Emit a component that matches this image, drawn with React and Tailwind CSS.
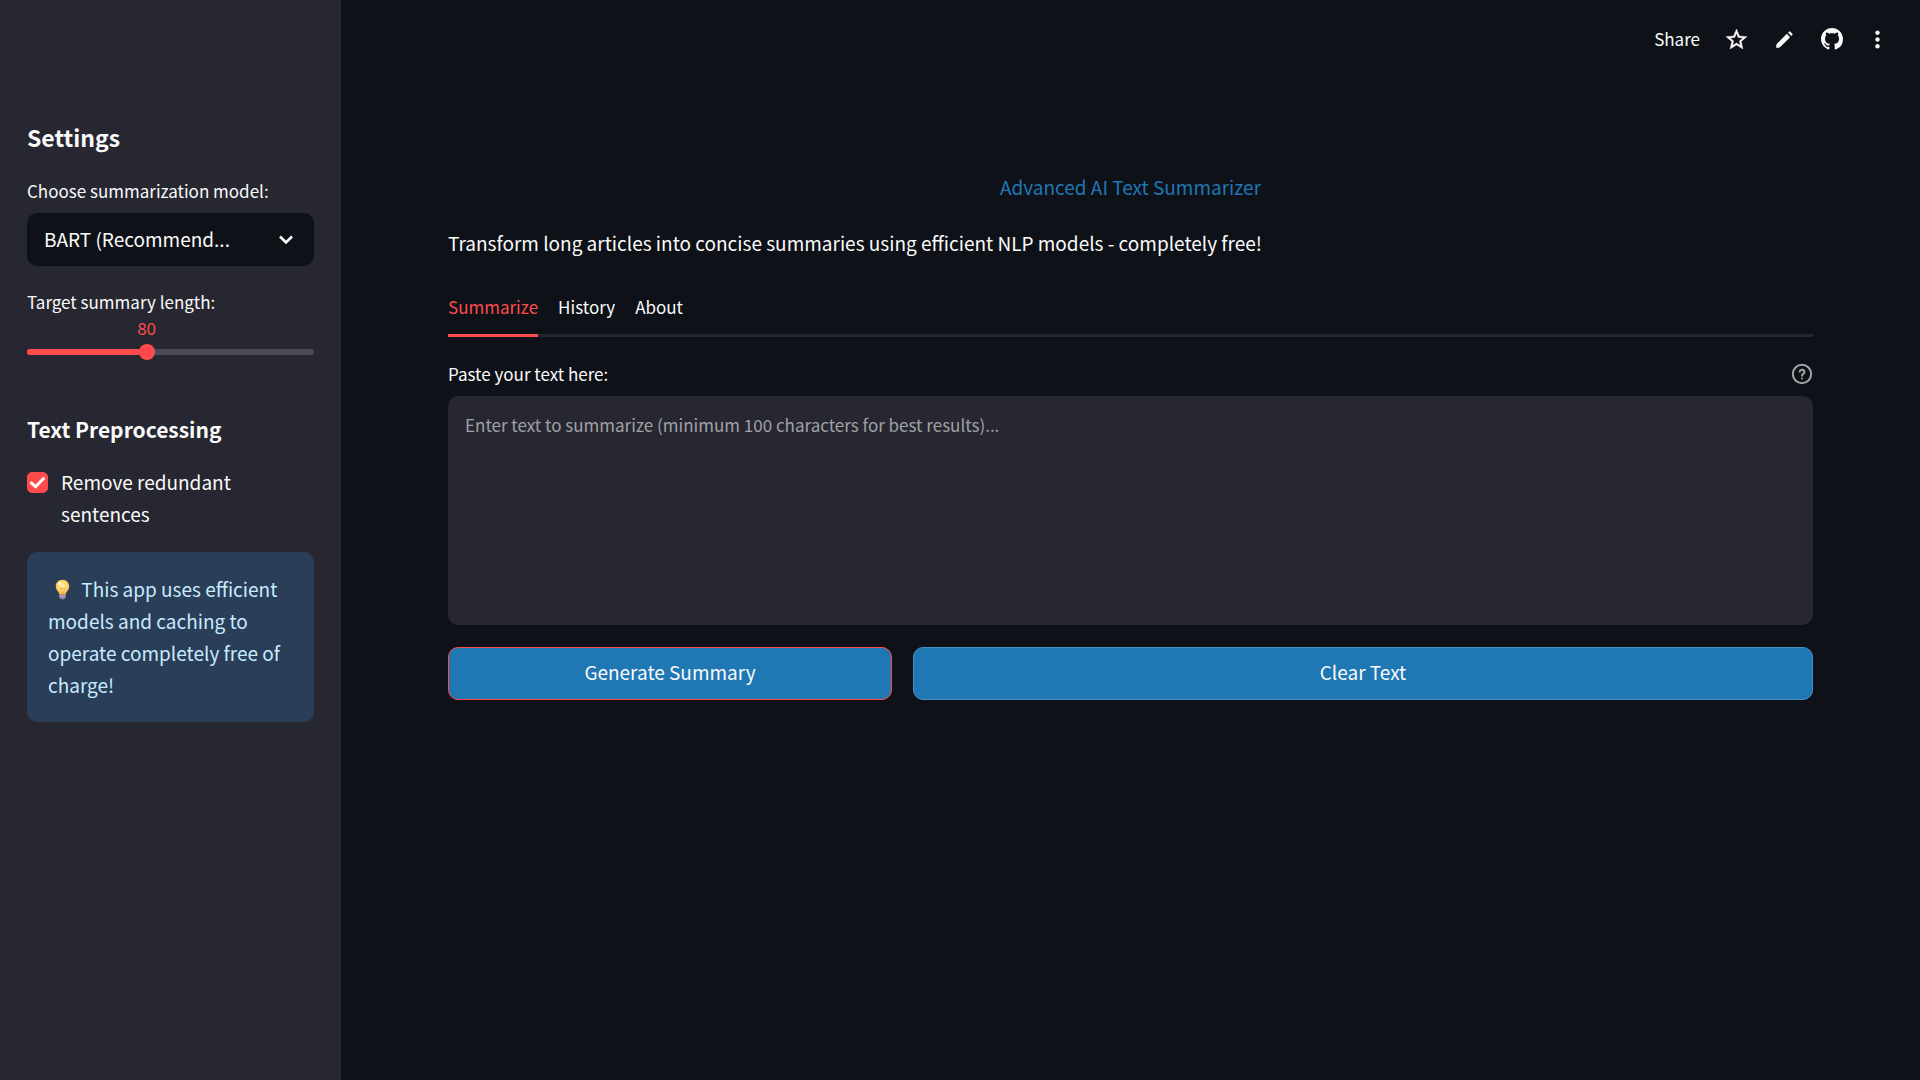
import { useState } from "react";

const FONT = "font-['Noto_Sans_CJK_SC','Noto_Sans',sans-serif]";

function IconButton({ label, className, children }) {
  return (
    <button type="button" aria-label={label} className={`flex h-8 items-center justify-center ${className}`}>
      {children}
    </button>
  );
}

function Header() {
  return (
    <header className="flex h-[78px] items-center justify-end pr-[27px]">
      <button type="button" className="mr-3 text-[17px] leading-8">Share</button>
      <IconButton label="Add to favorites" className="w-12">
        <svg viewBox="0 0 24 24" className="size-[25px]" fill="currentColor" stroke="currentColor" strokeWidth="0.4">
          <path d="M22 9.24l-7.19-.62L12 2 9.19 8.63 2 9.24l5.46 4.73L5.82 21 12 17.27 18.18 21l-1.63-7.03L22 9.24zM12 15.4l-3.76 2.27 1-4.28-3.32-2.88 4.38-.38L12 6.1l1.71 4.04 4.38.38-3.32 2.88 1 4.28L12 15.4z" />
        </svg>
      </IconButton>
      <IconButton label="Edit source" className="w-12">
        <svg viewBox="0 0 8 8" className="size-[17px]" fill="currentColor">
          <path d="M5.1 1.35L6.65 2.9 2.1 7.45Q1.6 7.9 1 7.9H.1V7Q.1 6.4.55 5.9zM5.65.8L6.15.3Q6.45.05 6.75.3L7.7 1.25Q7.95 1.55 7.7 1.85L7.2 2.35z" />
        </svg>
      </IconButton>
      <IconButton label="View on GitHub" className="w-12">
        <svg viewBox="0 0 16 16" className="size-[22px]" fill="currentColor">
          <path d="M8 0C3.58 0 0 3.58 0 8c0 3.54 2.29 6.53 5.47 7.59.4.07.55-.17.55-.38 0-.19-.01-.82-.01-1.49-2.01.37-2.53-.49-2.69-.94-.09-.23-.48-.94-.82-1.13-.28-.15-.68-.52-.01-.53.63-.01 1.08.58 1.23.82.72 1.21 1.87.87 2.33.66.07-.52.28-.87.51-1.07-1.78-.2-3.64-.89-3.64-3.95 0-.87.31-1.59.82-2.15-.08-.2-.36-1.02.08-2.12 0 0 .67-.21 2.2.82.64-.18 1.32-.27 2-.27s1.36.09 2 .27c1.53-1.04 2.2-.82 2.2-.82.44 1.1.16 1.92.08 2.12.51.56.82 1.27.82 2.15 0 3.07-1.87 3.75-3.65 3.95.29.25.54.73.54 1.48 0 1.07-.01 1.93-.01 2.2 0 .21.15.46.55.38A8.01 8.01 0 0 0 16 8c0-4.42-3.58-8-8-8z" />
        </svg>
      </IconButton>
      <IconButton label="Main menu" className="ml-[5px] w-8">
        <svg viewBox="0 0 24 24" className="size-[27px]" fill="currentColor">
          <path d="M12 8c1.1 0 2-.9 2-2s-.9-2-2-2-2 .9-2 2 .9 2 2 2zm0 2c-1.1 0-2 .9-2 2s.9 2 2 2 2-.9 2-2-.9-2-2-2zm0 6c-1.1 0-2 .9-2 2s.9 2 2 2 2-.9 2-2-.9-2-2-2z" />
        </svg>
      </IconButton>
    </header>
  );
}

function LengthSlider() {
  const [value, setValue] = useState(80);
  const min = 30;
  const max = 150;
  const percent = ((value - min) / (max - min)) * 100;
  return (
    <div className="mt-[22px]">
      <label htmlFor="length" className="block text-[17px] leading-7">Target summary length:</label>
      <output
        htmlFor="length"
        className="block w-10 -translate-x-1/2 text-center text-[17px] leading-6 text-[#ff4b4b]"
        style={{ marginLeft: `${percent}%` }}
      >
        {value}
      </output>
      <div className="relative mt-1 flex h-4 items-center">
        <div className="flex h-1.5 w-full overflow-hidden rounded-full bg-[#4a4b55]">
          <div className="bg-[#ff4b4b]" style={{ width: `${percent}%` }} />
        </div>
        <input
          id="length"
          type="range"
          min={min}
          max={max}
          value={value}
          onChange={(e) => setValue(Number(e.target.value))}
          className="absolute inset-y-0 -right-2 -left-2 cursor-pointer appearance-none bg-transparent [&::-webkit-slider-thumb]:size-4 [&::-webkit-slider-thumb]:appearance-none [&::-webkit-slider-thumb]:rounded-full [&::-webkit-slider-thumb]:bg-[#ff4b4b]"
        />
      </div>
    </div>
  );
}

function Bulb() {
  return (
    <svg viewBox="0 0 16 22" className="mx-[7px] mb-1 inline-block h-[21px] w-[15px] align-middle" role="img" aria-label="Light bulb">
      <defs>
        <radialGradient id="glow" cx="50%" cy="45%" r="60%">
          <stop offset="0" stopColor="#fff3b0" />
          <stop offset="0.5" stopColor="#ffdb70" />
          <stop offset="1" stopColor="#f5b53d" />
        </radialGradient>
      </defs>
      <path d="M8 .5C3.8.5.8 3.6.8 7.4c0 2.5 1.2 4 2.5 5.8.8 1.1 1.2 2.3 1.4 3.4h6.6c.2-1.1.6-2.3 1.4-3.4 1.3-1.8 2.5-3.3 2.5-5.8C15.2 3.6 12.2.5 8 .5z" fill="url(#glow)" />
      <path d="M6.9 15.8L6 9.3q1 1 2 0 1 1 2 0l-.9 6.5" fill="none" stroke="#e39a2b" strokeWidth=".8" />
      <ellipse cx="5" cy="4.5" rx="1.6" ry="1.9" fill="#fffbe0" />
      <path d="M4.7 16.2h6.6v3.2q0 .8-.8 1l-1 .9h-3l-1-.9q-.8-.2-.8-1z" fill="#9a89ad" />
      <path d="M4.7 18h6.6" stroke="#c9bcd6" strokeWidth=".8" />
    </svg>
  );
}

function Sidebar() {
  return (
    <aside className="w-[341px] shrink-0 bg-[#262730] px-[27px] pt-[117px]">
      <h2 className="text-[23px] leading-10 font-bold">Settings</h2>

      <label htmlFor="model" className="mt-5 block text-[17px] leading-7">Choose summarization model:</label>
      <div className="relative mt-2">
        <select
          id="model"
          className="block h-[53px] w-full appearance-none rounded-[10px] bg-[#0e1117] pr-16 pb-px pl-[17px] text-[19px]"
        >
          <option value="bart">BART (Recommend...</option>
          <option value="t5">T5 Small</option>
        </select>
        <svg viewBox="0 0 16 10" className="pointer-events-none absolute top-[22px] right-5 h-[10px] w-4" fill="none" stroke="currentColor" strokeWidth="2.6">
          <path d="M2 1.5l6 6 6-6" />
        </svg>
      </div>

      <LengthSlider />

      <h3 className="mt-[53px] text-[21px] leading-8 font-bold">Text Preprocessing</h3>

      <label className="mt-[21px] flex gap-[13px] text-[19px] leading-8">
        <span className="relative mt-[6px] block size-[21px] shrink-0">
          <input type="checkbox" defaultChecked className="peer block size-[21px] appearance-none rounded-[5px] border border-gray-500 checked:border-[#ff4b4b] checked:bg-[#ff4b4b]" />
          <svg viewBox="0 0 21 21" className="pointer-events-none absolute inset-0 hidden size-[21px] peer-checked:block" fill="none" stroke="white" strokeWidth="3">
            <path d="M3.5 10.2l5 4.5 8.8-9" />
          </svg>
        </span>
        <span>Remove redundant sentences</span>
      </label>

      <div className="mt-[22px] rounded-[10px] bg-[#2b3e58] p-[21px] text-[19px] leading-8 text-[#c7ebff]">
        <Bulb /> This app uses efficient models and caching to operate completely free of charge!
      </div>
    </aside>
  );
}

const TABS = ["Summarize", "History", "About"];

function Tabs() {
  const [active, setActive] = useState("Summarize");
  return (
    <div role="tablist" className="mt-[21px] flex h-[57px] gap-5 border-b-3 border-[#23262c]">
      {TABS.map((tab) => (
        <button
          key={tab}
          type="button"
          role="tab"
          aria-selected={active === tab}
          onClick={() => setActive(tab)}
          className="-mb-[3px] h-[57px] border-b-3 border-transparent pb-px text-[17px] leading-6 aria-selected:border-[#ff4b4b] aria-selected:text-[#ff4b4b]"
        >
          {tab}
        </button>
      ))}
    </div>
  );
}

function Main() {
  const [text, setText] = useState("");
  return (
    <main className="px-[107px] pt-[93px]">
      <h1 className="text-center text-[19px] leading-8 text-[#1f77b4]">Advanced AI Text Summarizer</h1>
      <p className="mt-6 text-[19px] leading-8">
        Transform long articles into concise summaries using efficient NLP models - completely free!
      </p>

      <Tabs />

      <div className="mt-[21px] flex h-8 items-center justify-between">
        <label htmlFor="source" className="text-[17px] leading-8">Paste your text here:</label>
        <button type="button" aria-label="Help">
          <svg viewBox="0 0 24 24" className="block size-[22px] text-[#a3a4a8]" fill="none" stroke="currentColor" strokeWidth="2.2" strokeLinecap="round" strokeLinejoin="round">
            <circle cx="12" cy="12" r="10" />
            <path d="M9.4 9.4a2.700 2.700 0 0 1 5.300.6c0 1.700-2.700 2.100-2.700 3.800M12 17h.01" />
          </svg>
        </button>
      </div>
      <textarea
        id="source"
        value={text}
        onChange={(e) => setText(e.target.value)}
        placeholder="Enter text to summarize (minimum 100 characters for best results)..."
        className="mt-[6px] block h-[229px] w-full resize-none rounded-[10px] bg-[#262730] px-[17px] py-4 text-[17px] leading-[26px] placeholder:text-[#a0a1a5]"
      />

      <div className="mt-[22px] flex gap-[21px]">
        <button type="button" className="h-[53px] w-[444px] rounded-[10px] border border-[#ff4b4b] bg-[#1f77b4] pb-0.5 text-[19px]">
          Generate Summary
        </button>
        <button type="button" onClick={() => setText("")} className="h-[53px] flex-1 rounded-[10px] border border-[#4890c2] bg-[#1f77b4] pb-0.5 text-[19px]">
          Clear Text
        </button>
      </div>
    </main>
  );
}

export default function App() {
  return (
    <div lang="en" className={`flex min-h-screen bg-[#0e1117] text-[#fafafa] ${FONT}`}>
      <Sidebar />
      <div className="min-w-0 flex-1">
        <Header />
        <Main />
      </div>
    </div>
  );
}
